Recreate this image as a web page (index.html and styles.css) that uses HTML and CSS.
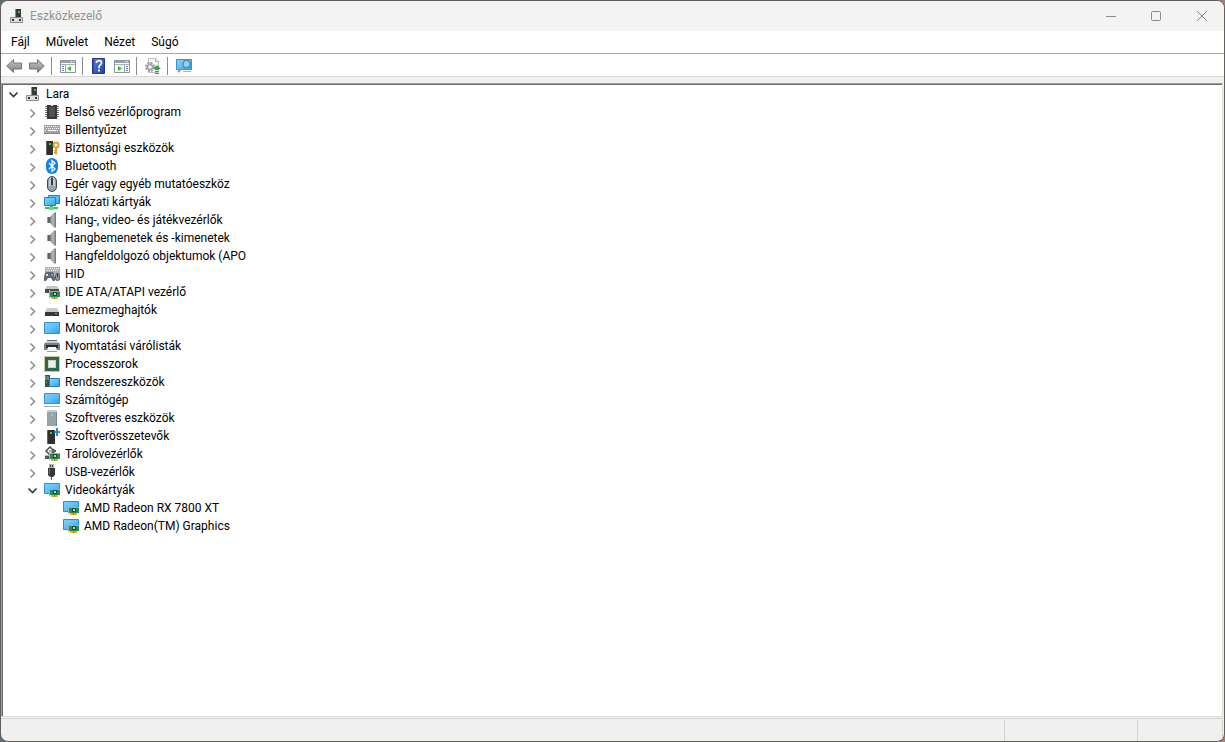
FILE: index.html
```
<!DOCTYPE html>
<html lang="hu">
  <head>
    <meta charset="UTF-8" />
    <meta name="viewport" content="width=device-width, initial-scale=1.0" />
    <title>Eszközkezelő</title>
    <link rel="stylesheet" href="styles.css">
  </head>
  <body>
    <!-- Icon set -->
    <svg class="sprite" aria-hidden="true">
      <defs>
        <linearGradient id="screen" x1="0" y1="0" x2="1" y2="1">
          <stop offset="0" stop-color="#7fd3ff" /><stop offset="0.5" stop-color="#5fc0fa" /><stop offset="1" stop-color="#2f9fea" />
        </linearGradient>
        <linearGradient id="cone" x1="0" y1="0" x2="1" y2="0">
          <stop offset="0" stop-color="#7b8186" /><stop offset="0.5" stop-color="#b4babe" /><stop offset="1" stop-color="#6c7277" />
        </linearGradient>
        <linearGradient id="arrow" x1="0" y1="0" x2="0" y2="1">
          <stop offset="0" stop-color="#c4c4c4" /><stop offset="0.5" stop-color="#a4a4a4" /><stop offset="1" stop-color="#7b7b7b" />
        </linearGradient>
        <linearGradient id="help-blue" x1="0" y1="0" x2="1" y2="1">
          <stop offset="0" stop-color="#5f7fe0" /><stop offset="1" stop-color="#1e3fae" />
        </linearGradient>
      </defs>

      <symbol id="i-open" viewBox="0 0 16 16"><path d="M4.500 6.500l4 4 4-4" fill="none" stroke="#333" stroke-width="1.6" /></symbol>
      <symbol id="i-closed" viewBox="0 0 16 16"><path d="M6.500 5.500l4 4-4 4" fill="none" stroke="#8f8f8f" stroke-width="1.6" /></symbol>

      <symbol id="i-computer" viewBox="0 0 16 16">
        <path d="M6 1h6v8H6z" fill="#383838" /><path d="M6 1h1v8H6z" fill="#8a8a8a" />
        <path d="M9 3h2v2H9z" fill="#28cf35" />
        <path d="M1.500 9.500h12v5h-12z" fill="#dedede" stroke="#8f8f8f" />
        <path d="M3 11h2v2H3zM10 11h2v2h-2z" fill="#333" />
      </symbol>
      <symbol id="i-chip" viewBox="0 0 16 16">
        <path d="M1 2.500h14M1 4.500h14M1 6.500h14M1 8.500h14M1 10.500h14M1 12.500h14" stroke="#6e6e6e" />
        <path d="M3 1h3l2 1 2-1h3v14H3z" fill="#353535" /><path d="M5 3h6v10H5z" fill="#505050" />
      </symbol>
      <symbol id="i-keyboard" viewBox="0 0 16 16">
        <path d="M0 3h16v9H0z" fill="#9da3a8" /><path d="M0 11h16v1H0z" fill="#7f868c" />
        <path d="M1 4.500h14M2 6.500h13M1 8.500h2M13 8.500h2" stroke="#fff" stroke-dasharray="1 1" />
        <path d="M4 8.500h8" stroke="#fff" />
      </symbol>
      <symbol id="i-security" viewBox="0 0 16 16">
        <path d="M2 1h7v14H2z" fill="#303030" /><path d="M2 1h1v14H2z" fill="#666" />
        <path d="M5 3h2v2H5z" fill="#2be03b" />
        <circle cx="12" cy="5" r="2.500" fill="#fff" stroke="#e0a031" stroke-width="2" />
        <path d="M11 7h2v7l-1 1-1-1z" fill="#e0a031" /><path d="M10 10h1v1h-1zM10 12h1v1h-1z" fill="#c78521" />
      </symbol>
      <symbol id="i-bluetooth" viewBox="0 0 16 16">
        <rect x="2" width="12" height="16" rx="6" fill="#0a84f5" />
        <path d="M5 5l6 6-3 2.500v-11L11 5l-6 6" fill="none" stroke="#fff" stroke-width="1.2" />
      </symbol>
      <symbol id="i-mouse" viewBox="0 0 16 16">
        <rect x="3.500" y=".5" width="9" height="15" rx="4.500" fill="#98a4af" stroke="#444b52" />
        <path d="M5 5q0-3 2-4v9H5zM9 1q2 1 2 4v5H9z" fill="#c5ced6" />
        <path d="M7 2h2v7H7z" fill="#333a40" />
      </symbol>
      <symbol id="i-network" viewBox="0 0 16 16">
        <path d="M4.500 1.500h11v8h-11z" fill="url(#screen)" stroke="#2480bd" />
        <path d="M.5 3.500h11v8H.5z" fill="url(#screen)" stroke="#2480bd" />
        <path d="M6 12h3v1h5v2H1v-2h5z" fill="#42bd4a" /><path d="M5 13h5v3H5z" fill="#6bd674" />
      </symbol>
      <symbol id="i-speaker" viewBox="0 0 16 16">
        <path d="M3 5h3v6H3z" fill="#5b6166" /><path d="M6 5l4-4.500h2v15h-2L6 11z" fill="url(#cone)" />
        <path d="M3 5h1v6H3z" fill="#9aa0a5" />
      </symbol>
      <symbol id="i-hid" viewBox="0 0 16 16">
        <path d="M1 1h15v7H1z" fill="#a9adb0" /><path d="M2 2.500h13M3 4.500h12" stroke="#fff" stroke-dasharray="1 1" />
        <path d="M1 7l2-1h5l2 1 1 5v3H9l-2-3H4l-2 3H0v-4z" fill="#5d6771" />
        <path d="M2 8h2v2H2z" fill="#d8dde2" /><path d="M7 8h2v2H7z" fill="#5caeea" />
        <rect x="11.500" y="7.500" width="4" height="7" rx="2" fill="#8f99a2" stroke="#4c545c" /><path d="M13 8h1v3h-1z" fill="#333" />
      </symbol>
      <!-- Green add-in card, laid over other icons -->
      <symbol id="i-card" viewBox="0 0 16 16">
        <path d="M6 7h10v6H6z" fill="#288a5d" /><path d="M6 7h10v1H6z" fill="#7fc0a0" />
        <path d="M5 6h1v8H5z" fill="#a3adb3" />
        <path d="M9 8h4v4H9z" fill="#1c4a34" /><path d="M10 9h2v2h-2z" fill="#b4d3c4" />
        <path d="M7 13h7v2H7z" fill="#f0ac1a" /><path d="M10 13h1v2h-1z" fill="#a9701a" />
      </symbol>
      <symbol id="i-ide" viewBox="0 0 16 16">
        <path d="M3 2h10l2 3H1z" fill="#c4c4c4" /><path d="M1 5h14v4H1z" fill="#4b4b4b" />
        <use href="#i-card" width="16" height="16" />
      </symbol>
      <symbol id="i-disk" viewBox="0 0 16 16">
        <path d="M3 6h10l2 4H1z" fill="#c9c9c9" /><path d="M1 10h14v4H1z" fill="#363636" />
        <path d="M11 11h2v1h-2z" fill="#35df43" />
      </symbol>
      <symbol id="i-monitor" viewBox="0 0 16 16">
        <path d="M.5 2.500h15v11H.5z" fill="url(#screen)" stroke="#3a92ca" />
      </symbol>
      <symbol id="i-printer" viewBox="0 0 16 16">
        <path d="M3 2h10v4H3z" fill="#d5d8da" /><path d="M3 2h10v1H3z" fill="#60676e" />
        <path d="M2 4h12l2 2v6H0V6z" fill="#7a8188" /><path d="M2 4h12v1H2z" fill="#b9bfc4" /><path d="M2 7h12v3H2z" fill="#282b2e" />
        <path d="M4 9h8l1 4H3z" fill="#f4f4f4" /><path d="M3 13h10v1H3z" fill="#9da3a8" />
      </symbol>
      <symbol id="i-processor" viewBox="0 0 16 16">
        <path d="M.5.5h15v15H.5z" fill="none" stroke="#b8862c" stroke-dasharray="1 1" />
        <path d="M1 1h14v14H1z" fill="#2d694c" /><path d="M4 4h8v8H4z" fill="#ccd2ce" /><path d="M5 5h6v6H5z" fill="#eff1ef" />
      </symbol>
      <symbol id="i-system" viewBox="0 0 16 16">
        <path d="M1 1h5v12H1z" fill="#444a50" /><path d="M1 3h4M1 5h4" stroke="#9ba2a8" /><path d="M2 8h1v1H2z" fill="#36df45" />
        <path d="M5.500 4.500h10v8h-10z" fill="url(#screen)" stroke="#2480bd" />
      </symbol>
      <symbol id="i-desktop" viewBox="0 0 16 16">
        <path d="M.5 1.500h15v10H.5z" fill="url(#screen)" stroke="#3a92ca" />
        <path d="M0 14h16v1H0z" fill="#a0afb9" />
      </symbol>
      <symbol id="i-software" viewBox="0 0 16 16">
        <path d="M4 0h8l1 2v14H3V2z" fill="#98a2a9" /><path d="M4 0h8l1 2H3z" fill="#c4cbd0" />
        <path d="M7 4h2v2H7z" fill="#5fe2ed" /><path d="M12 2h1v14h-1z" fill="#78838b" />
      </symbol>
      <symbol id="i-component" viewBox="0 0 16 16">
        <path d="M3 2h8v14H3z" fill="#303030" /><path d="M3 2h1v14H3z" fill="#696969" /><path d="M6 4h2v2H6z" fill="#2be03b" />
        <path d="M12 0h2v3h2v2h-2v3h-2V5h-2V3h2z" fill="#268ad5" />
      </symbol>
      <symbol id="i-storage" viewBox="0 0 16 16">
        <path d="M6 1L2 5l4 4 4-4z" fill="none" stroke="#4b4b4b" stroke-width="1.500" /><path d="M5 5h7M9 3l3 2-3 2" fill="none" stroke="#555" />
        <path d="M1 9h5v4H1z" fill="#555" /><path d="M1 9h5v1H1z" fill="#bbb" />
        <use href="#i-card" width="16" height="16" />
      </symbol>
      <symbol id="i-usb" viewBox="0 0 16 16">
        <path d="M5 0h5v5H5z" fill="#b5b5b5" /><path d="M6 1h1v2H6zM8 1h1v2H8z" fill="#444" />
        <path d="M4 4h7v7l-2 2H6l-2-2z" fill="#383838" /><path d="M7 12h1v4H7z" fill="#555" /><path d="M5 5h1v5H5z" fill="#777" />
      </symbol>
      <symbol id="i-display" viewBox="0 0 16 16">
        <path d="M.5 1.500h15v10H.5z" fill="url(#screen)" stroke="#2f8dc8" />
        <use href="#i-card" width="16" height="16" />
      </symbol>

      <symbol id="i-back" viewBox="0 0 16 16">
        <path d="M.7 8L7.500 1.500v3.500h8v6h-8v3.500z" fill="url(#arrow)" stroke="#777" />
      </symbol>
      <symbol id="i-forward" viewBox="0 0 16 16">
        <path d="M15.300 8L8.500 1.500v3.500h-8v6h8v3.500z" fill="url(#arrow)" stroke="#777" />
      </symbol>
      <symbol id="i-window" viewBox="0 0 16 16">
        <path d="M.5 2.500h15v12H.5z" fill="#fbfbfb" stroke="#8b929b" /><path d="M1 3h14v2H1z" fill="#98a1ad" />
        <path d="M11 3h1v1h-1zM13 3h1v1h-1z" fill="#fff" /><path d="M1 6.500h14" stroke="#a9afb8" />
      </symbol>
      <symbol id="i-tree-pane" viewBox="0 0 16 16">
        <use href="#i-window" width="16" height="16" />
        <path d="M5.500 7v7" stroke="#9da4ae" /><path d="M2 8.500h2M2 10.500h2M2 12.500h2" stroke="#5c7eb4" />
        <path d="M11 8v5l-4-2.500z" fill="#35b92e" />
      </symbol>
      <symbol id="i-action-pane" viewBox="0 0 16 16">
        <use href="#i-window" width="16" height="16" />
        <path d="M10.500 7v7" stroke="#9da4ae" /><path d="M12 8.500h2M12 10.500h2M12 12.500h2" stroke="#5c7eb4" />
        <path d="M4 8v5l4-2.500z" fill="#35b92e" />
      </symbol>
      <symbol id="i-help" viewBox="0 0 16 16">
        <path d="M1.500.5h12v15h-12z" fill="url(#help-blue)" stroke="#23388b" /><path d="M2 1h1v14H2z" fill="#304b9f" />
        <path d="M5.500 5q0-2.300 2.500-2.300T10.500 5q0 1.300-1.300 2T8 9.500v.7" fill="none" stroke="#fff" stroke-width="1.700" />
        <path d="M7 11.500h2v2H7z" fill="#fff" />
      </symbol>
      <symbol id="i-update" viewBox="0 0 16 16">
        <path d="M3.500.5h7l3 3v11h-10z" fill="#f8f8f8" stroke="#c0c0c0" /><path d="M10.500.5v3h3" fill="none" stroke="#b0b0b0" />
        <circle cx="5" cy="9" r="4" fill="none" stroke="#9a9a9a" stroke-width="2" stroke-dasharray="2 1.140" />
        <circle cx="5" cy="9" r="2.500" fill="#f4f4f4" stroke="#a4a4a4" stroke-width="1.500" />
        <path d="M12 7l4 4h-2v1h-4v-1H8zM10 13h4v1h-4zM10 15h4v1h-4z" fill="#25ad38" />
      </symbol>
      <symbol id="i-scan" viewBox="0 0 16 16">
        <path d="M.5 1.500h15v10H.5z" fill="url(#screen)" stroke="#3a92ca" />
        <path d="M7 13h8v1H7z" fill="#a5b0b8" /><path d="M8 8.500L2 14" stroke="#8d979f" stroke-width="2" />
        <circle cx="10.500" cy="6" r="3.500" fill="#8fd2f8" stroke="#5d8196" stroke-width="1.200" />
      </symbol>
    </svg>

    <div class="window">
      <header class="titlebar">
        <svg class="icon"><use href="#i-computer" /></svg>
        <h1>Eszközkezelő</h1>
        <div class="caption-buttons">
          <button type="button" aria-label="Kis méret"><svg viewBox="0 0 12 12"><path d="M1 6.500h10" /></svg></button>
          <button type="button" aria-label="Teljes méret"><svg viewBox="0 0 12 12"><rect x=".5" y="1.500" width="9" height="9" rx="1" /></svg></button>
          <button type="button" aria-label="Bezárás"><svg viewBox="0 0 12 12"><path d="M1 1l10 10M11 1L1 11" /></svg></button>
        </div>
      </header>

      <nav class="menubar">
        <button type="button">Fájl</button>
        <button type="button">Művelet</button>
        <button type="button">Nézet</button>
        <button type="button">Súgó</button>
      </nav>

      <div class="toolbar">
        <button type="button" aria-label="Vissza"><svg class="icon"><use href="#i-back" /></svg></button>
        <button type="button" aria-label="Előre"><svg class="icon"><use href="#i-forward" /></svg></button>
        <span class="separator"></span>
        <button type="button" aria-label="Konzolfa"><svg class="icon"><use href="#i-tree-pane" /></svg></button>
        <span class="separator"></span>
        <button type="button" aria-label="Súgó"><svg class="icon"><use href="#i-help" /></svg></button>
        <button type="button" aria-label="Műveletpanel"><svg class="icon"><use href="#i-action-pane" /></svg></button>
        <span class="separator"></span>
        <button type="button" aria-label="Frissítés"><svg class="icon"><use href="#i-update" /></svg></button>
        <span class="separator"></span>
        <button type="button" aria-label="Hardverváltozások keresése"><svg class="icon"><use href="#i-scan" /></svg></button>
      </div>

      <main class="tree">
        <ul>
          <li>
            <div class="row"><button type="button" aria-label="Összecsukás"><svg class="icon"><use href="#i-open" /></svg></button><svg class="icon"><use href="#i-computer" /></svg><span>Lara</span></div>
            <ul>
              <li><div class="row"><button type="button" aria-label="Kibontás"><svg class="icon"><use href="#i-closed" /></svg></button><svg class="icon"><use href="#i-chip" /></svg><span>Belső vezérlőprogram</span></div></li>
              <li><div class="row"><button type="button" aria-label="Kibontás"><svg class="icon"><use href="#i-closed" /></svg></button><svg class="icon"><use href="#i-keyboard" /></svg><span>Billentyűzet</span></div></li>
              <li><div class="row"><button type="button" aria-label="Kibontás"><svg class="icon"><use href="#i-closed" /></svg></button><svg class="icon"><use href="#i-security" /></svg><span>Biztonsági eszközök</span></div></li>
              <li><div class="row"><button type="button" aria-label="Kibontás"><svg class="icon"><use href="#i-closed" /></svg></button><svg class="icon"><use href="#i-bluetooth" /></svg><span>Bluetooth</span></div></li>
              <li><div class="row"><button type="button" aria-label="Kibontás"><svg class="icon"><use href="#i-closed" /></svg></button><svg class="icon"><use href="#i-mouse" /></svg><span>Egér vagy egyéb mutatóeszköz</span></div></li>
              <li><div class="row"><button type="button" aria-label="Kibontás"><svg class="icon"><use href="#i-closed" /></svg></button><svg class="icon"><use href="#i-network" /></svg><span>Hálózati kártyák</span></div></li>
              <li><div class="row"><button type="button" aria-label="Kibontás"><svg class="icon"><use href="#i-closed" /></svg></button><svg class="icon"><use href="#i-speaker" /></svg><span>Hang-, video- és játékvezérlők</span></div></li>
              <li><div class="row"><button type="button" aria-label="Kibontás"><svg class="icon"><use href="#i-closed" /></svg></button><svg class="icon"><use href="#i-speaker" /></svg><span>Hangbemenetek és -kimenetek</span></div></li>
              <li><div class="row"><button type="button" aria-label="Kibontás"><svg class="icon"><use href="#i-closed" /></svg></button><svg class="icon"><use href="#i-speaker" /></svg><span>Hangfeldolgozó objektumok (APO</span></div></li>
              <li><div class="row"><button type="button" aria-label="Kibontás"><svg class="icon"><use href="#i-closed" /></svg></button><svg class="icon"><use href="#i-hid" /></svg><span>HID</span></div></li>
              <li><div class="row"><button type="button" aria-label="Kibontás"><svg class="icon"><use href="#i-closed" /></svg></button><svg class="icon"><use href="#i-ide" /></svg><span>IDE ATA/ATAPI vezérlő</span></div></li>
              <li><div class="row"><button type="button" aria-label="Kibontás"><svg class="icon"><use href="#i-closed" /></svg></button><svg class="icon"><use href="#i-disk" /></svg><span>Lemezmeghajtók</span></div></li>
              <li><div class="row"><button type="button" aria-label="Kibontás"><svg class="icon"><use href="#i-closed" /></svg></button><svg class="icon"><use href="#i-monitor" /></svg><span>Monitorok</span></div></li>
              <li><div class="row"><button type="button" aria-label="Kibontás"><svg class="icon"><use href="#i-closed" /></svg></button><svg class="icon"><use href="#i-printer" /></svg><span>Nyomtatási várólisták</span></div></li>
              <li><div class="row"><button type="button" aria-label="Kibontás"><svg class="icon"><use href="#i-closed" /></svg></button><svg class="icon"><use href="#i-processor" /></svg><span>Processzorok</span></div></li>
              <li><div class="row"><button type="button" aria-label="Kibontás"><svg class="icon"><use href="#i-closed" /></svg></button><svg class="icon"><use href="#i-system" /></svg><span>Rendszereszközök</span></div></li>
              <li><div class="row"><button type="button" aria-label="Kibontás"><svg class="icon"><use href="#i-closed" /></svg></button><svg class="icon"><use href="#i-desktop" /></svg><span>Számítógép</span></div></li>
              <li><div class="row"><button type="button" aria-label="Kibontás"><svg class="icon"><use href="#i-closed" /></svg></button><svg class="icon"><use href="#i-software" /></svg><span>Szoftveres eszközök</span></div></li>
              <li><div class="row"><button type="button" aria-label="Kibontás"><svg class="icon"><use href="#i-closed" /></svg></button><svg class="icon"><use href="#i-component" /></svg><span>Szoftverösszetevők</span></div></li>
              <li><div class="row"><button type="button" aria-label="Kibontás"><svg class="icon"><use href="#i-closed" /></svg></button><svg class="icon"><use href="#i-storage" /></svg><span>Tárolóvezérlők</span></div></li>
              <li><div class="row"><button type="button" aria-label="Kibontás"><svg class="icon"><use href="#i-closed" /></svg></button><svg class="icon"><use href="#i-usb" /></svg><span>USB-vezérlők</span></div></li>
              <li>
                <div class="row"><button type="button" aria-label="Összecsukás"><svg class="icon"><use href="#i-open" /></svg></button><svg class="icon"><use href="#i-display" /></svg><span>Videokártyák</span></div>
                <ul class="devices">
                  <li><div class="row"><svg class="icon"><use href="#i-display" /></svg><span>AMD Radeon RX 7800 XT</span></div></li>
                  <li><div class="row"><svg class="icon"><use href="#i-display" /></svg><span>AMD Radeon(TM) Graphics</span></div></li>
                </ul>
              </li>
            </ul>
          </li>
        </ul>
      </main>

      <footer class="statusbar">
        <span></span>
        <span></span>
        <span></span>
      </footer>
    </div>
  </body>
</html>
```
FILE: styles.css
```
body {
  margin: 0;
  background: linear-gradient(90deg, #5f6b70, #6b6262 50%, #9b8176);
  font-family: "Segoe UI", Roboto, "Noto Sans", sans-serif;
  font-size: 12px;
  line-height: 18px;
  color: #000;
}
button {
  padding: 0;
  border: none;
  background: none;
  font: inherit;
  color: inherit;
}
ul {
  margin: 0;
  padding: 0;
  list-style: none;
}
.sprite {
  position: absolute;
  width: 0;
  height: 0;
}
.icon {
  display: block;
  flex: none;
  width: 16px;
  height: 16px;
}
.window {
  box-sizing: border-box;
  display: flex;
  flex-direction: column;
  height: 100vh;
  border: 1px solid #655d5b;
  border-radius: 8px;
  background: #f0f0f0;
  overflow: hidden;
}

/* Title bar */
.titlebar {
  display: flex;
  align-items: center;
  height: 30px;
  padding-left: 8px;
  background: #f3f3f3;
  color: #929292;
}
.titlebar h1 {
  flex: 1;
  margin: 0 0 0 5px;
  font-size: 12px;
  font-weight: normal;
}
.caption-buttons {
  display: flex;
}
.caption-buttons button {
  display: flex;
  align-items: center;
  justify-content: center;
  width: 46px;
  height: 30px;
}
.caption-buttons button:last-child {
  width: 44px;
}
.caption-buttons svg {
  width: 12px;
  height: 12px;
  fill: none;
  stroke: #8b8b8b;
}

/* Menu and toolbar */
.menubar {
  display: flex;
  gap: 16px;
  height: 22px;
  padding-left: 10px;
  background: #fff;
  border-bottom: 1px solid #a8a8a8;
}
.toolbar {
  display: flex;
  align-items: center;
  height: 20px;
  padding: 2px 0 0 1px;
  background: #fff;
  border-bottom: 1px solid #d9d9d9;
}
.toolbar button {
  display: flex;
  justify-content: center;
  width: 23px;
}
.separator {
  width: 1px;
  height: 18px;
  margin: 0 4px 0 3px;
  background: #8d8d8d;
}

/* Device tree */
.tree {
  flex: 1;
  min-height: 0;
  margin: 6px 1px 0 0;
  padding: 1px 0 0 1px;
  background: #fff;
  border: 1px solid #a0a0a0;
  border-right-color: #dcdcdc;
  border-bottom-color: #dcdcdc;
  box-shadow: inset 1px 1px #696969;
  overflow: hidden;
}
.tree ul ul {
  padding-left: 19px;
}
.row {
  display: flex;
  align-items: center;
  height: 18px;
  white-space: nowrap;
}
.row button {
  display: flex;
  justify-content: center;
  width: 20px;
  margin-right: 2px;
}
.row span {
  margin-left: 5px;
}
.devices .row {
  padding-left: 22px;
}

/* Status bar */
.statusbar {
  display: flex;
  height: 22px;
  margin-top: 1px;
  padding-right: 1px;
  border-top: 1px solid #d5d5d5;
}
.statusbar span {
  box-sizing: border-box;
  width: 133px;
  margin-top: 1px;
  border-right: 1px solid #d2d2d2;
}
.statusbar span:first-child {
  flex: 1;
}
.statusbar span:last-child {
  width: 85px;
}
```
